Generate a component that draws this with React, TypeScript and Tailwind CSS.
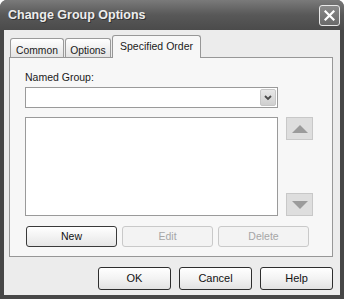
const tabs = [
  { label: "Common", active: false, width: "w-[54px]" },
  { label: "Options", active: false, width: "w-[46px]" },
  { label: "Specified Order", active: true, width: "w-[89px]" },
];

function Triangle({ up }: { up?: boolean }) {
  return (
    <svg width="16" height="8" viewBox="0 0 16 8">
      <polygon
        points={up ? "0,8 8,0 16,8" : "0,0 16,0 8,8"}
        fill="#9b9b9b"
      />
    </svg>
  );
}

function PanelButton({
  label,
  disabled,
  width,
}: {
  label: string;
  disabled?: boolean;
  width: string;
}) {
  return (
    <button
      type="button"
      className={
        disabled
          ? `${width} h-[21px] rounded-[3px] border border-[#c9c9c9] bg-[#f3f3f3] text-[#a6a6a6]`
          : `${width} h-[21px] rounded-[3px] border border-[#3a3a3a] bg-gradient-to-b from-white to-[#e6e6e6] text-[#111]`
      }
    >
      {label}
    </button>
  );
}

function DialogButton({ label }: { label: string }) {
  return (
    <button
      type="button"
      className="w-[73px] h-[23px] rounded-[3px] border border-[#2e2e2e] bg-gradient-to-b from-white via-[#f3f3f3] to-[#e2e2e2] text-[11px] text-[#111]"
    >
      {label}
    </button>
  );
}

export default function App() {
  return (
    <div className="w-[344px] h-[299px] bg-[#474747] flex flex-col rounded-t-[7px] overflow-hidden font-['Liberation_Sans',Arial,sans-serif] text-[10.5px] text-[#1a1a1a]">
      {/* title bar */}
      <div className="h-[30px] shrink-0 flex items-center justify-between pl-[8px] pr-[4px] bg-gradient-to-b from-[#7a7a7a] via-[#585858] to-[#4b4b4b]">
        <span className="text-[12.5px] font-bold text-[#ededed] [text-shadow:1px_1px_0_#333]">
          Change Group Options
        </span>
        <div className="w-[21px] h-[21px] mt-px rounded-[3px] border border-[#e8e8e8] bg-gradient-to-b from-[#8a8a8a] to-[#6a6a6a] flex items-center justify-center">
          <svg width="11" height="11" viewBox="0 0 11 11">
            <path d="M1.5 1.5 L9.5 9.5 M9.5 1.5 L1.5 9.5" stroke="#fff" strokeWidth="2.2" strokeLinecap="square" />
          </svg>
        </div>
      </div>

      {/* body */}
      <div className="flex-1 mx-[4px] mb-[4px] bg-[#ececec] pl-[5px] pr-[7px] pt-[5px] flex flex-col">
        {/* tab strip */}
        <div className="flex items-end pl-px">
          {tabs.map((t) =>
            t.active ? (
              <div
                key={t.label}
                className={`${t.width} relative z-10 -mb-px h-[23px] pt-[3px] text-center rounded-t-[3px] border border-b-0 border-[#979797] bg-[#f7f7f7] text-[10.5px]`}
              >
                {t.label}
              </div>
            ) : (
              <div
                key={t.label}
                className={`${t.width} h-[19px] pt-[4px] mr-px text-center rounded-t-[3px] border border-b-0 border-[#9a9a9a] bg-gradient-to-b from-white to-[#e4e4e4] text-[10.3px]`}
              >
                {t.label}
              </div>
            )
          )}
        </div>

        {/* tab panel */}
        <div className="h-[200px] border border-[#979797] bg-[#f7f7f7] pl-[15px] pt-[12px]">
          <div className="h-[14px] leading-[14px] text-[10.5px]">Named Group:</div>

          <div className="mt-[3px] w-[253px] h-[21px] border border-[#9a9a9a] bg-white flex justify-end items-center pr-px">
            <div className="w-[16px] h-[17px] rounded-[2px] border border-[#c6c6c6] bg-gradient-to-b from-[#e8e8e8] to-[#cfcfcf] flex items-center justify-center">
              <svg width="8" height="6" viewBox="0 0 8 6">
                <path d="M1 1 L4 4 L7 1" stroke="#4a4a4a" strokeWidth="1.8" fill="none" />
              </svg>
            </div>
          </div>

          <div className="mt-[9px] flex gap-[8px]">
            <div className="w-[253px] h-[99px] border border-[#9a9a9a] bg-white" />
            <div className="flex flex-col justify-between">
              <div className="w-[27px] h-[23px] border border-[#c8c8c8] bg-[#dedede] flex items-center justify-center">
                <Triangle up />
              </div>
              <div className="w-[27px] h-[23px] border border-[#c8c8c8] bg-[#dedede] flex items-center justify-center">
                <Triangle />
              </div>
            </div>
          </div>

          <div className="mt-[10px] flex pl-px">
            <PanelButton label="New" width="w-[91px]" />
            <div className="ml-[5px]">
              <PanelButton label="Edit" disabled width="w-[91px]" />
            </div>
            <div className="ml-[5px]">
              <PanelButton label="Delete" disabled width="w-[91px]" />
            </div>
          </div>
        </div>

        {/* dialog buttons */}
        <div className="mt-[10px] flex justify-end gap-[8px]">
          <DialogButton label="OK" />
          <DialogButton label="Cancel" />
          <DialogButton label="Help" />
        </div>
      </div>
    </div>
  );
}
